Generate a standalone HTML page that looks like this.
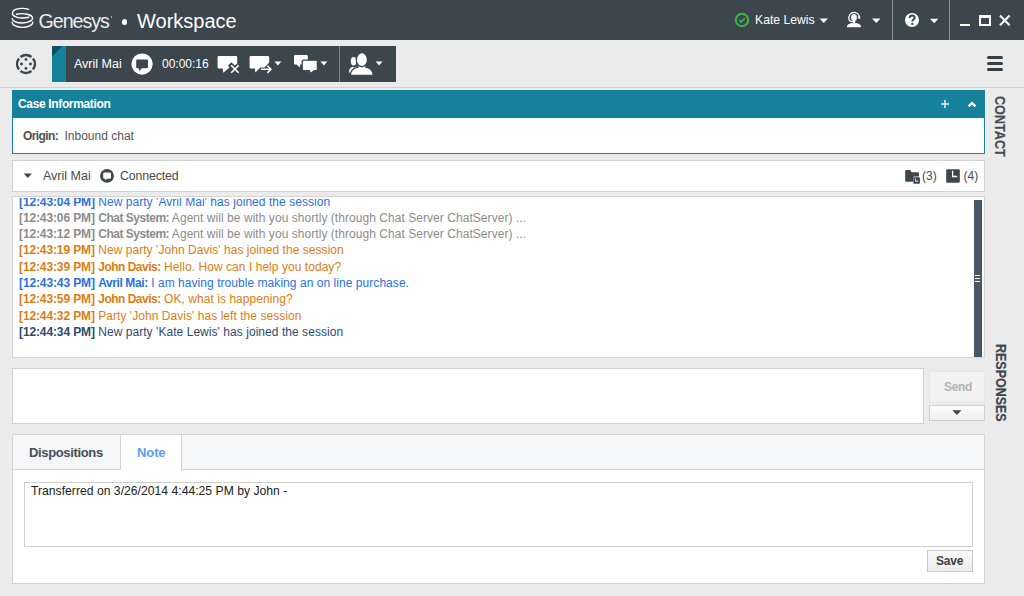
<!DOCTYPE html>
<html><head><meta charset="utf-8">
<style>
*{box-sizing:border-box;margin:0;padding:0}
html,body{width:1024px;height:596px;overflow:hidden;background:#ebebeb;font-family:"Liberation Sans",sans-serif;color:#444}
.a{position:absolute;white-space:pre}
svg{position:absolute;overflow:visible}
#hdr{position:absolute;left:0;top:0;width:1024px;height:40px;background:#3c464d}
#tb{position:absolute;left:0;top:40px;width:1024px;height:48px;background:#ebebeb;border-bottom:1px solid #d2d2d2}
#ibar{position:absolute;left:52px;top:46px;width:344px;height:36px;background:#3c464d}
#case{position:absolute;left:12px;top:90px;width:973px;height:64px;border:1px solid #16819a;background:#fff}
#caseh{position:absolute;left:0;top:0;width:971px;height:27px;background:#16819a}
#party{position:absolute;left:12px;top:160px;width:973px;height:32px;background:#fff;border:1px solid #d4d4d4}
#trans{position:absolute;left:12px;top:196px;width:973px;height:162px;background:#fff;border:1px solid #d4d4d4;overflow:hidden}
#input{position:absolute;left:12px;top:368px;width:912px;height:56px;background:#fff;border:1px solid #d4d4d4}
#send{position:absolute;left:929px;top:371px;width:56px;height:32px;background:#f2f2f2;border:1px solid #e6e6e6}
#senddd{position:absolute;left:929px;top:405px;width:56px;height:16px;background:linear-gradient(#fdfdfd,#efefef);border:1px solid #cfcfcf}
#tabs{position:absolute;left:12px;top:434px;width:973px;height:150px;background:#fff;border:1px solid #d4d4d4}
#tabh{position:absolute;left:0;top:0;width:971px;height:35px;background:#f5f6f8;border-bottom:1px solid #d4d4d4}
#t1{position:absolute;left:0;top:0;width:108px;height:34px;border-right:1px solid #d4d4d4}
#t2{position:absolute;left:108px;top:0;width:61px;height:35px;background:#fff;border-right:1px solid #d4d4d4}
#note{position:absolute;left:24px;top:482px;width:949px;height:65px;border:1px solid #cfcfcf;background:#fff}
#save{position:absolute;left:927px;top:550px;width:46px;height:22px;border:1px solid #c9c9c9;background:linear-gradient(#fafafa,#ececec)}
.w{color:#fff}
.b{font-weight:bold;letter-spacing:-0.12px}
.n{font-weight:bold;letter-spacing:-0.48px}
#tr{position:absolute;left:19px;top:193px;font-size:12px;line-height:16.3px;white-space:pre;letter-spacing:0.05px}
.og{color:#dd7d12}.bl{color:#2b70e4}.gy{color:#8c8c8c}.nv{color:#2e4a72}
.vt{position:absolute;font-weight:bold;font-size:15.4px;color:#474d52;-webkit-text-stroke:0.2px currentColor;transform-origin:0 0;white-space:pre}
</style></head><body>
<div id="hdr"></div>
<!-- logo -->
<svg style="left:10px;top:6px" width="26" height="24" viewBox="0 0 26 24" fill="none" stroke="#fff" stroke-width="1.4" stroke-linecap="round">
<path d="M18.5 3.4C14 1.8 3.5 1.8 2.4 6.8C2 11 10 13.2 19 11.2"/>
<path d="M6.5 8.2C14 6.6 22.6 8.6 22.6 12.2C22.6 15 17 17 12.2 17C6 17 2.2 14.6 2.2 12.6"/>
<path d="M2.2 16.2C2.2 19.2 7 21.4 12.5 21.4C18 21.4 22.8 19 22.8 16.2"/>
</svg>
<div class="a w" style="left:38.5px;top:8.5px;font-size:19.6px;line-height:24px;letter-spacing:-1px;color:#ececec">Genesys</div>
<div class="a" style="left:110.5px;top:16px;width:1.6px;height:1.6px;border-radius:1px;background:#bbb"></div>
<div class="a" style="left:121.8px;top:19.3px;width:5.4px;height:5.4px;border-radius:3px;background:#fff"></div>
<div class="a w" style="left:137px;top:9px;font-size:20px;line-height:24px;letter-spacing:0px">Workspace</div>
<!-- status -->
<svg style="left:734px;top:12px" width="16" height="16" viewBox="0 0 16 16" fill="none" stroke="#3cb649" stroke-width="2"><circle cx="8" cy="8" r="6.2"/><path d="M5.2 8.2L7.2 10.1L10.9 6.3" stroke-width="1.6"/></svg>
<div class="a w" style="left:755px;top:12px;font-size:12.2px;line-height:16px">Kate Lewis</div>
<svg style="left:819px;top:18px" width="10" height="6" viewBox="0 0 10 6"><path d="M0.5 0.5H9L4.75 5Z" fill="#fff"/></svg>
<!-- agent -->
<svg style="left:842px;top:8px" width="24" height="22" viewBox="0 0 24 22" fill="#fff">
<ellipse cx="12" cy="9.6" rx="2.9" ry="3.5"/><rect x="10.8" y="11" width="2.4" height="4.5"/>
<path d="M4.9 19.2C5 16.6 7.6 15.4 10 15L12 15.6L14 15C16.4 15.4 19 16.6 19.1 19.2Z"/>
<path d="M7 11.6C6.2 7.2 8.8 4.4 12 4.4C15.2 4.4 17.4 6.6 17.2 9.4" fill="none" stroke="#fff" stroke-width="1.3"/>
<rect x="16.2" y="7.8" width="2" height="3.2" rx="0.9"/>
<path d="M7 11.4C7.2 13 8.4 13.5 10.8 13.5" fill="none" stroke="#fff" stroke-width="1.2"/>
</svg>
<svg style="left:872px;top:18px" width="10" height="6" viewBox="0 0 10 6"><path d="M0 0.5H8.5L4.25 5Z" fill="#fff"/></svg>
<div class="a" style="left:892px;top:0;width:1px;height:40px;background:#8b9196"></div>
<!-- help -->
<svg style="left:904px;top:12px" width="16" height="16" viewBox="0 0 16 16"><circle cx="8" cy="8" r="7" fill="#fff"/><path d="M5.6 6.1C5.6 4.4 6.6 3.5 8.1 3.5C9.6 3.5 10.6 4.4 10.6 5.7C10.6 7.5 8.3 7.6 8.3 9.6" fill="none" stroke="#3c464d" stroke-width="2"/><circle cx="8.3" cy="11.9" r="1.15" fill="#3c464d"/></svg>
<svg style="left:930px;top:18px" width="10" height="6" viewBox="0 0 10 6"><path d="M0 0.8H8.3L4.15 5.2Z" fill="#fff"/></svg>
<div class="a" style="left:949px;top:0;width:1px;height:40px;background:#8b9196"></div>
<!-- window buttons -->
<div class="a" style="left:960px;top:23.5px;width:10px;height:2.5px;background:#fff"></div>
<div class="a" style="left:979px;top:15px;width:12px;height:11px;border:2px solid #fff;border-top-width:3px"></div>
<svg style="left:999px;top:15px" width="12" height="11" viewBox="0 0 12 11" stroke="#fff" stroke-width="2.1"><path d="M1 0.6L10.6 10.2M10.6 0.6L1 10.2"/></svg>

<div id="tb"></div>
<!-- toolbar left icon -->
<svg style="left:15px;top:53px" width="22" height="22" viewBox="0 0 22 22" fill="none" stroke="#3c464d" stroke-width="2.5">
<path d="M5.52 3.99A8.9 8.9 0 0 1 16.48 3.99"/><path d="M18.01 5.52A8.9 8.9 0 0 1 18.01 16.48"/><path d="M16.48 18.01A8.9 8.9 0 0 1 5.52 18.01"/><path d="M3.99 16.48A8.9 8.9 0 0 1 3.99 5.52"/>
<g fill="#3c464d" stroke="none"><circle cx="11" cy="6.4" r="1.45"/><circle cx="6.5" cy="11" r="1.45"/><circle cx="15.5" cy="11" r="1.45"/><circle cx="11" cy="15.4" r="1.45"/></g>
</svg>
<div id="ibar"></div>
<div class="a" style="left:52px;top:46px;width:14px;height:36px;background:#16819a"></div>
<svg style="left:52px;top:46px" width="14" height="14" viewBox="0 0 14 14"><path d="M0 0H10.5L0 10.5Z" fill="#0f4f5e"/></svg>
<div class="a w" style="left:74px;top:56px;font-size:12.5px;line-height:16px">Avril Mai</div>
<svg style="left:131px;top:53px" width="22" height="22" viewBox="0 0 22 22"><circle cx="11.1" cy="11.1" r="10.6" fill="#fff"/><path d="M6.2 6.5H16Q17 6.5 17 7.5V14.2Q17 15.2 16 15.2H10.8L8.3 18.1L7.7 15.2H6.2Q5.2 15.2 5.2 14.2V7.5Q5.2 6.5 6.2 6.5Z" fill="#3c464d"/></svg>
<div class="a w" style="left:162px;top:56px;font-size:12px;line-height:16px">00:00:16</div>
<!-- chat x -->
<svg style="left:214px;top:52px" width="30" height="24" viewBox="0 0 30 24" fill="#fff">
<path d="M4.8 4H22Q23.2 4 23.2 5.2V11.7L20.8 13.6L17.3 10.2L14 13.6L15.5 15.6L9.3 20.7L8.7 16.5H4.8Q3.6 16.5 3.6 15.3V5.2Q3.6 4 4.8 4Z"/>
<path d="M17.2 13.4L24.6 20.8M24.6 13.4L17.2 20.8" stroke="#fff" stroke-width="1.6"/>
</svg>
<!-- transfer -->
<svg style="left:246px;top:52px" width="30" height="24" viewBox="0 0 30 24" fill="#fff">
<path d="M4.8 4H22Q23.2 4 23.2 5.2V10.6L18.4 15.4H14.4L9.4 20.6L8.8 16.5H4.8Q3.6 16.5 3.6 15.3V5.2Q3.6 4 4.8 4Z"/>
<path d="M15 17.3H24.6M21.3 13.7L25 17.3L21.3 20.9" fill="none" stroke="#fff" stroke-width="1.5"/>
</svg>
<svg style="left:274px;top:61px" width="8" height="5" viewBox="0 0 8 5"><path d="M0.5 0.6H7.3L3.9 4.6Z" fill="#fff"/></svg>
<!-- conference -->
<svg style="left:290px;top:50px" width="30" height="26" viewBox="0 0 30 26" fill="#fff">
<path d="M5.2 4.9H16.6Q17.8 4.9 17.8 6.1V13.2Q17.8 14.4 16.6 14.4H10.2L9.6 17.4L6.6 14.4H5.2Q4 14.4 4 13.2V6.1Q4 4.9 5.2 4.9Z"/>
<path d="M13.6 10.2H26Q27.4 10.2 27.4 11.6V19.2Q27.4 20.6 26 20.6H24.2L20.4 23.8L19.4 20.6H13.6Q12.2 20.6 12.2 19.2V11.6Q12.2 10.2 13.6 10.2Z" stroke="#3c464d" stroke-width="1.3"/>
</svg>
<svg style="left:320px;top:61px" width="8" height="5" viewBox="0 0 8 5"><path d="M0.5 0.6H7.3L3.9 4.6Z" fill="#fff"/></svg>
<div class="a" style="left:339px;top:46px;width:1px;height:36px;background:#7e868c"></div>
<!-- person -->
<svg style="left:344px;top:50px" width="32" height="28" viewBox="0 0 32 28" fill="#fff">
<ellipse cx="9.6" cy="11.2" rx="2.8" ry="4.2"/>
<path d="M5 22.4C4.8 19.6 6.4 17.4 8.6 16.8L10.2 17.4L12.4 16.4L14 17.2L8 22.4Z"/>
<ellipse cx="17.9" cy="9.7" rx="5.6" ry="7" stroke="#3c464d" stroke-width="1.3"/>
<path d="M6.6 25.4C6.2 21.4 9 18.6 13.2 17.2L17.9 17.4L22.6 17.2C26.8 18.6 29.4 21.4 29 25.4Z" stroke="#3c464d" stroke-width="1.3"/>
<path d="M14.4 16.2L17.9 17.6L21.4 16.2L21.4 18L14.4 18Z"/>
</svg>
<svg style="left:375px;top:61px" width="8" height="5" viewBox="0 0 8 5"><path d="M0.7 0.6H7.5L4.1 4.6Z" fill="#fff"/></svg>
<!-- hamburger -->
<div class="a" style="left:987px;top:56px;width:16px;height:3px;border-radius:1.5px;background:#353f46"></div>
<div class="a" style="left:987px;top:62px;width:16px;height:3px;border-radius:1.5px;background:#353f46"></div>
<div class="a" style="left:987px;top:68px;width:16px;height:3px;border-radius:1.5px;background:#353f46"></div>

<!-- case info -->
<div id="case"><div id="caseh"></div></div>
<div class="a w" style="left:18px;top:96px;font-size:12px;line-height:16px;font-weight:bold;letter-spacing:-0.35px">Case Information</div>
<svg style="left:940px;top:99px" width="10" height="10" viewBox="0 0 10 10" stroke="#fff" stroke-width="1.5" opacity="0.92"><path d="M5 1V9M1 5H9"/></svg>
<svg style="left:967px;top:99.5px" width="10" height="8" viewBox="0 0 10 8" fill="none" stroke="#fff" stroke-width="2.2"><path d="M1.6 6.4L5 3L8.4 6.4"/></svg>
<div class="a" style="left:23px;top:128px;font-size:12px;line-height:16px;font-weight:bold;color:#4f4f4f;letter-spacing:-0.6px">Origin:</div>
<div class="a" style="left:64.5px;top:128px;font-size:12px;line-height:16px;color:#555">Inbound chat</div>
<div class="vt" style="left:1008.5px;top:95.5px;transform:rotate(90deg) scaleX(0.82)">CONTACT</div>

<!-- party -->
<div id="party"></div>
<svg style="left:23px;top:173px" width="10" height="6" viewBox="0 0 10 6"><path d="M0.8 0.6H8.8L4.8 5Z" fill="#3c464d"/></svg>
<div class="a" style="left:43px;top:168px;font-size:12.5px;line-height:16px;color:#4a4a4a">Avril Mai</div>
<svg style="left:99px;top:168px" width="16" height="16" viewBox="0 0 16 16"><circle cx="8" cy="7.9" r="6.9" fill="#3c464d"/><path d="M5.4 4.5H10.8Q12 4.5 12 5.7V9.6Q12 10.8 10.8 10.8H7.8L6.4 12.4L6.2 10.8H5.4Q4.2 10.8 4.2 9.6V5.7Q4.2 4.5 5.4 4.5Z" fill="#fff"/></svg>
<div class="a" style="left:120px;top:168px;font-size:12.3px;line-height:16px;color:#4a4a4a;letter-spacing:-0.1px">Connected</div>
<svg style="left:904px;top:168px" width="18" height="17" viewBox="0 0 18 17"><path d="M2 2.1H6.2L7.6 4.2H14Q15 4.2 15 5.2V8.6H10.6Q9.2 8.6 9.2 10V13.8H2Q1.2 13.8 1.2 13V2.9Q1.2 2.1 2 2.1Z" fill="#3c464d"/><rect x="9.3" y="9.2" width="6.6" height="6.5" rx="0.9" fill="#3c464d"/><path d="M11.6 10.6V13.3H14.2" fill="none" stroke="#fff" stroke-width="0.9"/></svg>
<div class="a" style="left:922px;top:168px;font-size:12px;line-height:16px;color:#4a4a4a">(3)</div>
<svg style="left:946px;top:169px" width="14" height="14" viewBox="0 0 14 14"><rect x="0.2" y="0.2" width="13.6" height="13.6" rx="1.2" fill="#3c464d"/><path d="M6.6 1.8V7.5H11.2" fill="none" stroke="#fff" stroke-width="1.3"/></svg>
<div class="a" style="left:963.5px;top:168px;font-size:12px;line-height:16px;color:#4a4a4a">(4)</div>

<!-- transcript -->
<div id="trans"></div>
<div class="a" style="left:13px;top:198px;width:960px;height:159px;overflow:hidden">
<div id="tr" style="left:6px;top:-4.5px"><span class="bl"><span class="b">[12:43:04 PM]</span> New party 'Avril Mai' has joined the session</span>
<span class="gy"><span class="b">[12:43:06 PM]</span> <span class="n">Chat System:</span> Agent will be with you shortly (through Chat Server ChatServer) ...</span>
<span class="gy"><span class="b">[12:43:12 PM]</span> <span class="n">Chat System:</span> Agent will be with you shortly (through Chat Server ChatServer) ...</span>
<span class="og"><span class="b">[12:43:19 PM]</span> New party 'John Davis' has joined the session</span>
<span class="og"><span class="b">[12:43:39 PM]</span> <span class="n" style="letter-spacing:-0.5px">John Davis:</span> Hello. How can I help you today?</span>
<span class="bl"><span class="b">[12:43:43 PM]</span> <span class="n" style="letter-spacing:-0.4px">Avril Mai:</span> I am having trouble making an on line purchase.</span>
<span class="og"><span class="b">[12:43:59 PM]</span> <span class="n" style="letter-spacing:-0.5px">John Davis:</span> OK, what is happening?</span>
<span class="og"><span class="b">[12:44:32 PM]</span> Party 'John Davis' has left the session</span>
<span class="nv"><span class="b">[12:44:34 PM]</span> New party 'Kate Lewis' has joined the session</span></div>
</div>
<div class="a" style="left:974px;top:200px;width:8px;height:157px;background:#4b5863"></div>
<div class="a" style="left:975px;top:275px;width:5px;height:1px;background:#fff"></div>
<div class="a" style="left:975px;top:278px;width:5px;height:1px;background:#fff"></div>
<div class="a" style="left:975px;top:281px;width:5px;height:1px;background:#fff"></div>

<!-- input -->
<div id="input"></div>
<div id="send"></div>
<div class="a" style="left:944px;top:379px;font-size:12px;line-height:16px;font-weight:bold;color:#b4b4b4;letter-spacing:-0.3px">Send</div>
<div id="senddd"></div>
<svg style="left:952px;top:410px" width="10" height="6" viewBox="0 0 10 6"><path d="M0.3 0.3H9.5L4.9 5Z" fill="#3c464d"/></svg>
<div class="vt" style="left:1009.7px;top:343.5px;color:#3e474e;transform:rotate(90deg) scaleX(0.81)">RESPONSES</div>

<!-- tabs -->
<div id="tabs"><div id="tabh"></div><div id="t1"></div><div id="t2"></div></div>
<div class="a" style="left:29px;top:445px;font-size:13px;line-height:16px;font-weight:bold;color:#474f55;letter-spacing:-0.35px">Dispositions</div>
<div class="a" style="left:137px;top:445px;font-size:13px;line-height:16px;font-weight:bold;color:#5b9cf2;letter-spacing:-0.1px">Note</div>
<div id="note"></div>
<div class="a" style="left:31px;top:483px;font-size:12.2px;line-height:16px;color:#222">Transferred on 3/26/2014 4:44:25 PM by John -</div>
<div id="save"></div>
<div class="a" style="left:936px;top:553px;font-size:12px;line-height:16px;font-weight:bold;color:#3b3f42;letter-spacing:-0.2px">Save</div>
</body></html>
